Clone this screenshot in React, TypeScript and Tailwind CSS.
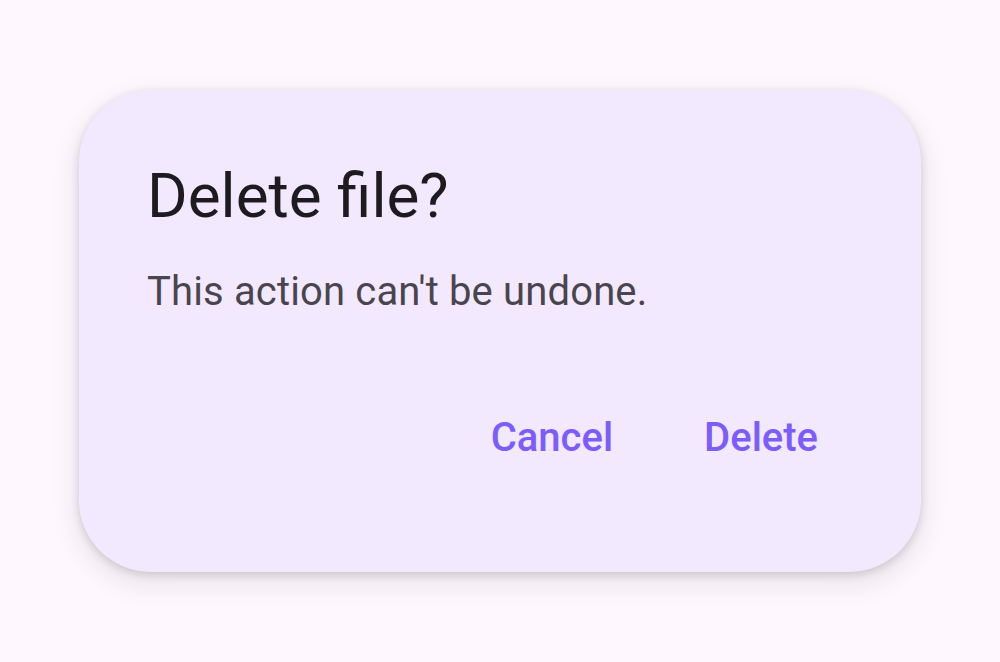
import React from "react";

export default function App() {
  return (
    <div className="w-[1000px] h-[662px] bg-[#fef7fe] flex items-center justify-center" style={{ fontFamily: "Roboto, 'Noto Sans', sans-serif" }}>
      <div className="w-[842px] h-[482px] bg-[#f3e9fe] rounded-[72px] shadow-[0_3px_8px_rgba(0,0,0,0.14),0_10px_24px_6px_rgba(0,0,0,0.07)] pt-[68px] pl-[68px] pr-[103px] flex flex-col">
        <h1 className="text-[62px] leading-[76px] text-[#1d1b20] font-normal">Delete file?</h1>
        <p className="mt-[34px] text-[40px] leading-[48px] text-[#49454f] tracking-[0.15px]">This action can't be undone.</p>
        <div className="mt-[98px] flex justify-end gap-[91px]">
          <button className="text-[40px] leading-[48px] font-medium text-[#7b5cff]">Cancel</button>
          <button className="text-[40px] leading-[48px] font-medium text-[#7b5cff]">Delete</button>
        </div>
      </div>
    </div>
  );
}
